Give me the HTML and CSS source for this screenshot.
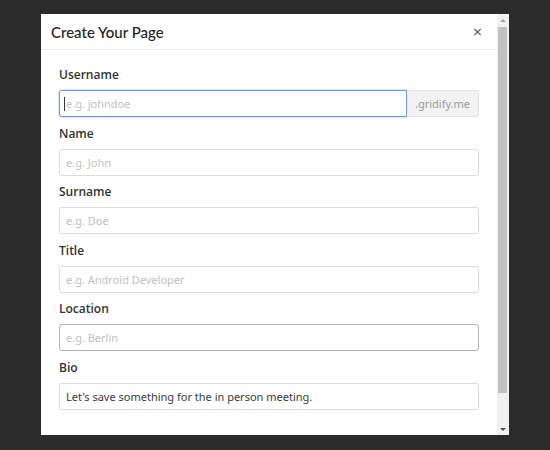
FILE: index.html
```html
<!DOCTYPE html>
<html>
<head>
<meta charset="utf-8">
<link rel="stylesheet" href="styles.css">
</head>
<body>
<div class="modal">
  <div class="content">
    <div class="modal-header">
      <h5 class="modal-title">Create Your Page</h5>
      <span class="close">&times;</span>
    </div>
    <div class="modal-body">
      <div class="group">
        <label>Username</label>
        <div class="input-row">
          <div class="input focus"><span class="caret"></span><span class="ph">e.g. johndoe</span></div>
          <div class="append">.gridify.me</div>
        </div>
      </div>
      <div class="group">
        <label>Name</label>
        <div class="input"><span class="ph">e.g. John</span></div>
      </div>
      <div class="group">
        <label>Surname</label>
        <div class="input"><span class="ph">e.g. Doe</span></div>
      </div>
      <div class="group">
        <label>Title</label>
        <div class="input"><span class="ph">e.g. Android Developer</span></div>
      </div>
      <div class="group">
        <label>Location</label>
        <div class="input hover"><span class="ph">e.g. Berlin</span></div>
      </div>
      <div class="group">
        <label>Bio</label>
        <div class="input"><span class="val">Let's save something for the in person meeting.</span></div>
      </div>
    </div>
  </div>
  <div class="scrollbar">
    <div class="btn"><span class="arrow-up"></span></div>
    <div class="track"><div class="thumb"></div></div>
    <div class="btn"><span class="arrow-down"></span></div>
  </div>
</div>
</body>
</html>
```
FILE: styles.css
```css
html, body {
  margin: 0;
  padding: 0;
  background: #2b2b2b;
  height: 100%;
}
body {
  padding-top: 14px;
  padding-left: 41px;
  box-sizing: border-box;
}
.modal {
  width: 468px;
  height: 421px;
  background: #fff;
  display: flex;
  font-family: "Lato", "Open Sans", sans-serif;
  color: #212529;
}
.content {
  flex: 1;
  overflow: hidden;
}
.scrollbar {
  width: 12px;
  background: #f1f1f1;
  display: flex;
  flex-direction: column;
}
.btn {
  height: 12px;
  display: flex;
  align-items: center;
  justify-content: center;
}
.arrow-up {
  width: 0;
  height: 0;
  border-left: 3px solid transparent;
  border-right: 3px solid transparent;
  border-bottom: 3px solid #a3a3a3;
  margin-left: -1px;
}
.arrow-down {
  width: 0;
  height: 0;
  border-left: 3px solid transparent;
  border-right: 3px solid transparent;
  border-top: 3px solid #505050;
  margin-left: -1px;
}
.track {
  flex: 1;
  padding: 1px 2px 0 1px;
}
.thumb {
  height: 366px;
  background: #c1c1c1;
}
.modal-header {
  display: flex;
  align-items: center;
  justify-content: space-between;
  height: 35px;
  padding: 0 14px 0 10px;
  border-bottom: 1px solid #ececec;
}
.modal-title {
  margin: 0;
  font-size: 15px;
  font-weight: 500;
  color: #222;
}
.close {
  font-family: "DejaVu Sans", sans-serif;
  font-size: 13px;
  color: #555;
  line-height: 1;
}
.modal-body {
  padding: 17px 18px 60px 18px;
}
.group {
  margin-bottom: 8.5px;
}
label {
  display: block;
  font-family: "Open Sans", sans-serif;
  font-size: 12px;
  font-weight: 600;
  line-height: 16px;
  margin-bottom: 7px;
  color: #333;
}
.input-row {
  display: flex;
}
.input {
  flex: 1;
  height: 27px;
  box-sizing: border-box;
  border: 1px solid #dcdcdc;
  border-radius: 3px;
  display: flex;
  align-items: center;
  padding: 0 6px;
  font-family: "Noto Sans", sans-serif;
  font-size: 11px;
}
.input.focus {
  border-color: #6b9cec;
  box-shadow: 0 0 0 1px rgba(107, 156, 236, 0.25);
  border-top-right-radius: 0;
  border-bottom-right-radius: 0;
  padding-left: 4px;
}
.input.hover {
  border-color: #b3b3b3;
}
.caret {
  width: 1px;
  height: 14px;
  background: #333;
  margin-right: 1px;
}
.ph {
  color: #c2c2c2;
}
.val {
  color: #3a3a3a;
}
.append {
  width: 72px;
  height: 27px;
  box-sizing: border-box;
  border: 1px solid #e2e2e2;
  border-left: none;
  border-radius: 0 3px 3px 0;
  background: #f3f3f3;
  color: #9a9a9a;
  font-family: "Noto Sans", sans-serif;
  font-size: 11px;
  display: flex;
  align-items: center;
  justify-content: center;
}
```
